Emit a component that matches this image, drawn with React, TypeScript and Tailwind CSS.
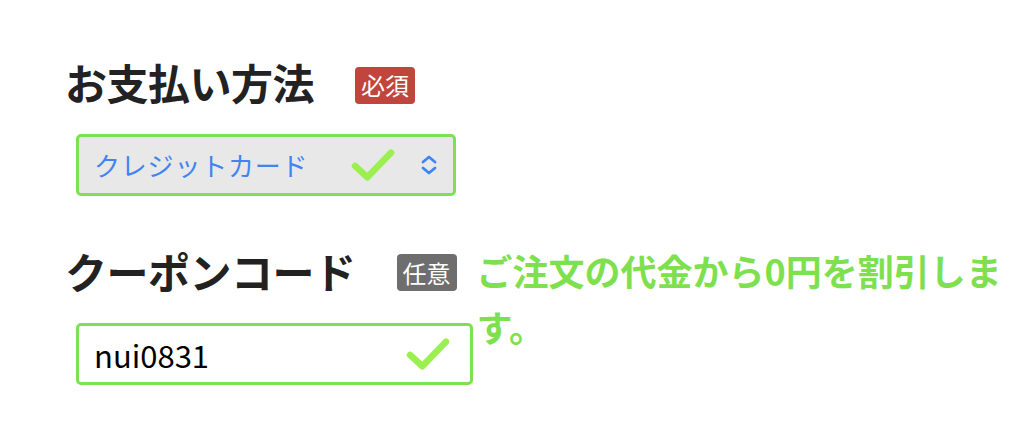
import React from 'react';

const CheckMark: React.FC<{ className?: string }> = ({ className = '' }) => (
    <svg viewBox="0 0 48 36" className={className} fill="none">
        <path d="M5 19 L18 31 L43 5" stroke="#9bf04f" strokeWidth="7" strokeLinecap="round" strokeLinejoin="round" />
    </svg>
);

const Badge: React.FC<{ label: string; color: string }> = ({ label, color }) => (
    <span className={`inline-flex items-center justify-center h-[37px] px-[6px] rounded-[4px] text-white text-[24px] leading-none ${color}`}>
        {label}
    </span>
);

const App: React.FC = () => {
    return (
        <div
            className="w-[1024px] h-[433px] bg-white overflow-hidden pl-[65px] pt-[52px]"
            style={{ fontFamily: '"Noto Sans CJK JP", "Noto Sans", sans-serif' }}
        >
            <div className="flex items-center h-[60px]">
                <h2 className="text-[42px] font-bold text-[#222] leading-none tracking-[-0.5px]">お支払い方法</h2>
                <div className="ml-[41px] mt-[6px]">
                    <Badge label="必須" color="bg-[#c0453d]" />
                </div>
            </div>

            <div className="ml-[11px] mt-[22px] w-[380px] h-[62px] rounded-[5px] border-[3px] border-[#7ee053] bg-[#e8e8e8] flex items-center pl-[15px] pr-[14px]">
                <span className="text-[26px] text-[#3f84f2] tracking-[0.8px] leading-none">クレジットカード</span>
                <CheckMark className="ml-auto w-[48px] h-[34px]" />
                <svg viewBox="0 0 20 22" className="ml-[22px] w-[20px] h-[22px]" fill="none">
                    <path d="M4 8 L10 3 L16 8 M4 14 L10 19 L16 14" stroke="#3f84f2" strokeWidth="2.8" strokeLinecap="round" strokeLinejoin="round" />
                </svg>
            </div>

            <div className="flex items-start mt-[52px] h-[75px]">
                <h2 className="text-[42px] font-bold text-[#222] leading-none mt-[2px] tracking-[-0.5px]">クーポンコード</h2>
                <div className="ml-[41px] mt-[6px] shrink-0">
                    <Badge label="任意" color="bg-[#6e6e6e]" />
                </div>
                <p className="ml-[20px] w-[540px] text-[36px] font-bold text-[#7ee04f] leading-[56px] -mt-[6px]">
                    ご注文の代金から0円を割引します。
                </p>
            </div>

            <div className="ml-[11px] w-[397px] h-[62px] rounded-[5px] border-[3px] border-[#7ee053] bg-white flex items-center pl-[15px] pr-[18px]">
                <span className="text-[31px] text-black leading-none">nui0831</span>
                <CheckMark className="ml-auto w-[48px] h-[34px]" />
            </div>
        </div>
    );
};

export default App;
